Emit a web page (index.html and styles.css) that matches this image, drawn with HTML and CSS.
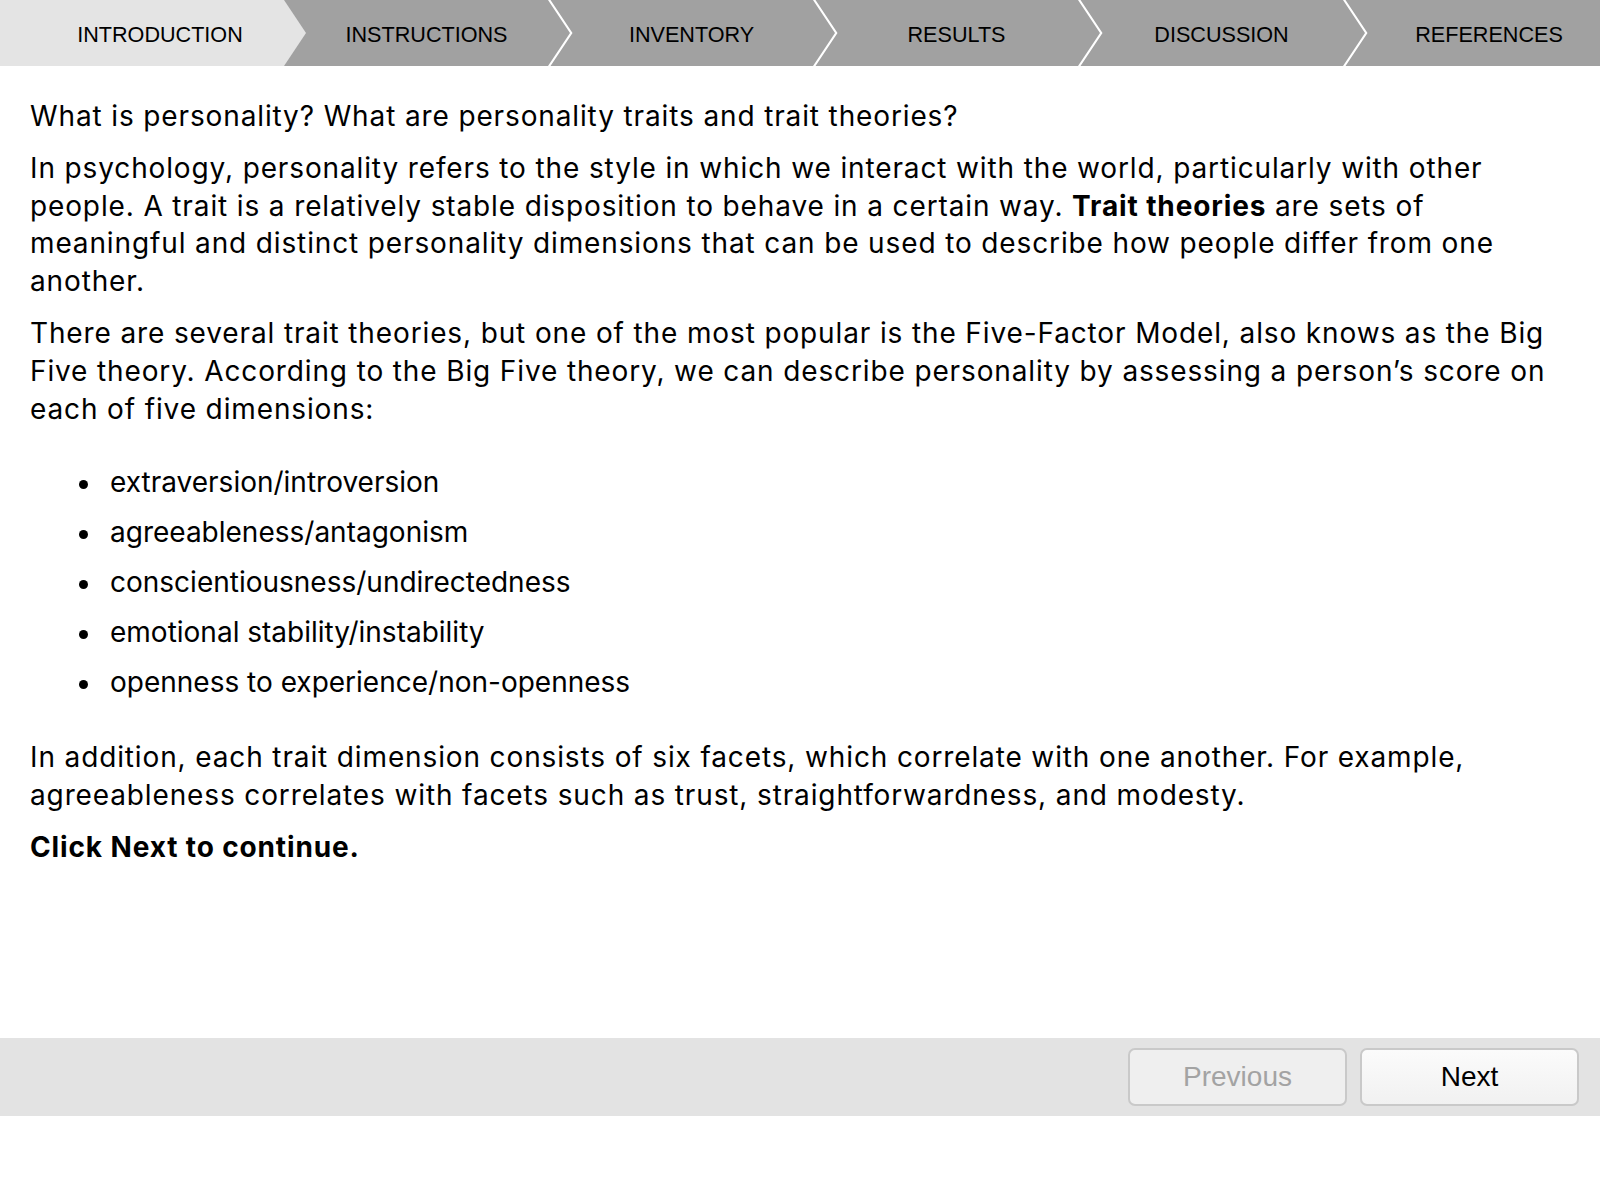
FILE: index.html
```html
<!DOCTYPE html>
<html lang="en">
<head>
<meta charset="utf-8">
<title>Personality Introduction</title>
<link rel="stylesheet" href="styles.css">
</head>
<body>
<nav class="steps">
  <div class="step step-first step-active"><span>INTRODUCTION</span></div>
  <div class="step step-mid"><span>INSTRUCTIONS</span></div>
  <div class="step step-mid"><span>INVENTORY</span></div>
  <div class="step step-mid"><span>RESULTS</span></div>
  <div class="step step-mid"><span>DISCUSSION</span></div>
  <div class="step step-last"><span>REFERENCES</span></div>
</nav>
<main class="content">
  <p>What is personality? What are personality traits and trait theories?</p>
  <p>In psychology, personality refers to the style in which we interact with the world, particularly with other people. A trait is a relatively stable disposition to behave in a certain way. <strong>Trait theories</strong> are sets of meaningful and distinct personality dimensions that can be used to describe how people differ from one another.</p>
  <p>There are several trait theories, but one of the most popular is the Five-Factor Model, also knows as the Big Five theory. According to the Big Five theory, we can describe personality by assessing a person’s score on each of five dimensions:</p>
  <ul class="dims">
    <li>extraversion/introversion</li>
    <li>agreeableness/antagonism</li>
    <li>conscientiousness/undirectedness</li>
    <li>emotional stability/instability</li>
    <li>openness to experience/non-openness</li>
  </ul>
  <p>In addition, each trait dimension consists of six facets, which correlate with one another. For example, agreeableness correlates with facets such as trust, straightforwardness, and modesty.</p>
  <p><strong>Click Next to continue.</strong></p>
</main>
<footer class="pager">
  <button class="btn btn-disabled" type="button">Previous</button>
  <button class="btn btn-next" type="button">Next</button>
</footer>
</body>
</html>
```

FILE: styles.css
```css
html, body {
  margin: 0;
  padding: 0;
  background: #ffffff;
}

body {
  font-family: Inter, "Open Sans", "Liberation Sans", sans-serif;
  color: #000;
}

.steps {
  display: flex;
  height: 66px;
  background: #a1a1a1;
  font-family: "Liberation Sans", Arial, sans-serif;
  font-size: 21.6px;
  color: #000;
}

.step {
  position: relative;
  display: flex;
  align-items: center;
  justify-content: center;
  box-sizing: border-box;
  height: 66px;
}

.step span {
  display: block;
  line-height: 1;
  padding-top: 3px;
}

.step-first {
  flex: 0 0 284px;
  padding-left: 36px;
  background: #e4e4e4;
}

.step-first::after {
  content: "";
  position: absolute;
  top: 0;
  left: 100%;
  width: 22px;
  height: 66px;
  background: #e4e4e4;
  clip-path: polygon(0 0, 100% 50%, 0 100%);
  z-index: 1;
}

.step-mid {
  flex: 0 0 265px;
  padding-left: 20px;
}

.step-mid::after {
  content: "";
  position: absolute;
  top: 0;
  left: 100%;
  width: 24.5px;
  height: 66px;
  background: #ffffff;
  clip-path: polygon(0 0, 2.5px 0, 24.5px 50%, 2.5px 100%, 0 100%, 22px 50%);
  margin-left: -1px;
  z-index: 1;
}

.step-last {
  flex: 1 1 auto;
  padding-left: 34px;
}

.content {
  box-sizing: border-box;
  height: 972px;
  padding: 32px 30px 0 30px;
  font-size: 28px;
  line-height: 37.8px;
}

.content p {
  margin: 0 0 14px 0;
  letter-spacing: 0.87px;
}

.content strong {
  font-weight: 700;
}

.dims {
  list-style: none;
  margin: 30px 0 32px 0;
  padding: 0 0 0 80px;
  letter-spacing: 0;
}

.dims li {
  position: relative;
  padding: 6px 0;
}

.dims li::before {
  content: "";
  position: absolute;
  left: -31px;
  top: 22px;
  width: 9px;
  height: 9px;
  border-radius: 50%;
  background: #000;
}

.pager {
  display: flex;
  justify-content: flex-end;
  align-items: center;
  gap: 13px;
  height: 78px;
  padding: 0 21px 0 0;
  background: #e3e3e3;
}

.btn {
  width: 219px;
  height: 58px;
  border: 2px solid #c9c9c9;
  border-radius: 7px;
  font-family: "Liberation Sans", Arial, sans-serif;
  font-size: 28px;
  padding: 0;
  cursor: pointer;
}

.btn-disabled {
  background: #efefef;
  color: #a3a3a3;
}

.btn-next {
  background: linear-gradient(#fbfbfb, #f1f1f1);
  color: #000;
}
```
